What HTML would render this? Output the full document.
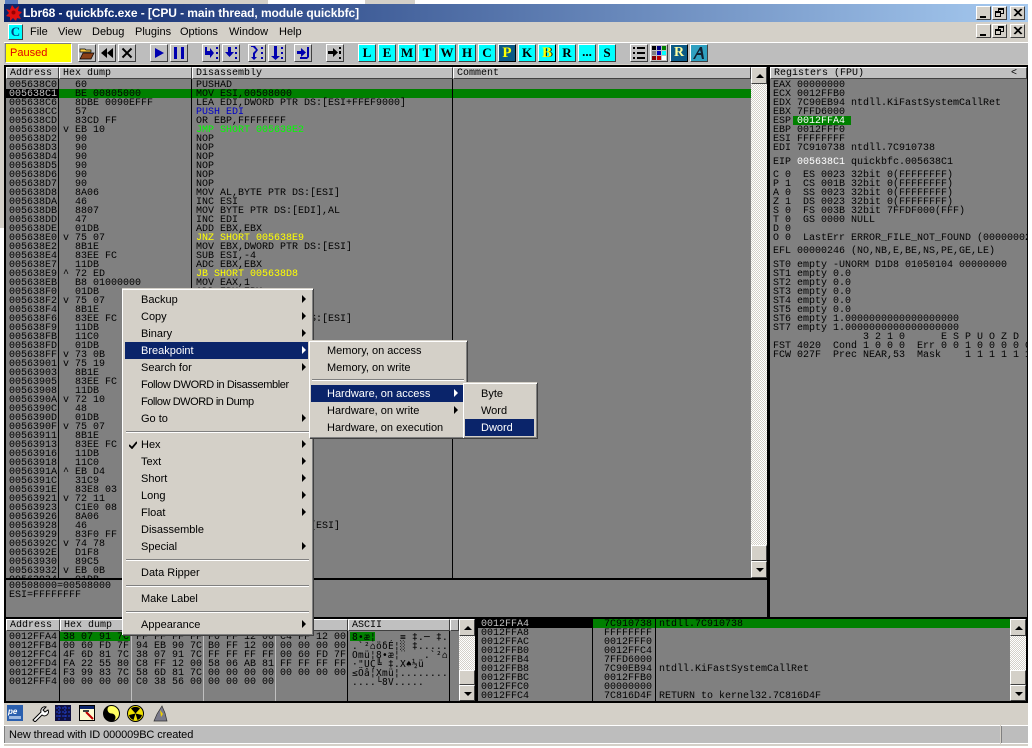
<!DOCTYPE html>
<html><head><meta charset="utf-8"><title>Lbr68</title>
<style>
html,body{margin:0;padding:0;background:#fff;width:1032px;height:748px;overflow:hidden}
div,pre,svg,span.a{position:absolute}
#root{left:0;top:0;width:1032px;height:748px;overflow:hidden;background:#fff;font-family:"Liberation Sans",sans-serif}
pre{margin:0;font:10px/9px "Liberation Mono","DejaVu Sans Mono",monospace;color:#000;white-space:pre;transform:translateY(1px)}
.hd{background:#c0c0c0;border-top:1px solid #fff;border-left:1px solid #fff;border-right:1px solid #404040;border-bottom:1px solid #404040;box-sizing:border-box;height:12px;font:10px/11px "Liberation Mono",monospace;padding-left:3px;color:#000;white-space:pre;overflow:hidden}
.b{background:#000}
.pane{background:#808080}
.mi{left:0;height:17px;font-size:11px;line-height:19px;white-space:pre;color:#000}
.sel{background:#0a246a;color:#fff}
.menu{background:#d4d0c8;border-top:1px solid #d4d0c8;box-shadow:inset 1px 1px 0 #fff,inset -1px -1px 0 #808080,1px 1px 0 #404040;box-sizing:border-box}
.ar{width:0;height:0;border-left:4px solid #000;border-top:4px solid transparent;border-bottom:4px solid transparent}
.sep{height:2px;background:linear-gradient(#808080 50%,#fff 50%)}
.m{font-size:11px;line-height:21px;top:22px;color:#000}
.tb{width:18px;height:18px;top:44px;background:#c0c0c0;box-sizing:border-box;border:1px solid;border-color:#fff #404040 #404040 #fff}
.lt{background:#0ff;font:bold 13px/16px "Liberation Serif",serif;text-align:center;color:#000}
.wb{width:15px;height:14px;background:#d4d0c8;box-sizing:border-box;border:1px solid;border-color:#fff #404040 #404040 #fff}
.sb{background:conic-gradient(#fff 25%,#d4d0c8 0 50%,#fff 0 75%,#d4d0c8 0) 0 0/2px 2px}
.sbb{background:#d4d0c8;box-sizing:border-box;border:1px solid;border-color:#fff #404040 #404040 #fff}
.up{left:4px;width:0;height:0;border-left:4px solid transparent;border-right:4px solid transparent;border-bottom:4px solid #000;top:6px}
.dn{left:4px;width:0;height:0;border-left:4px solid transparent;border-right:4px solid transparent;border-top:4px solid #000;top:6px}
</style></head><body>
<div id="root">
<!-- outer strips -->
<div style="left:0;top:0;width:268px;height:4px;background:#d4d0c8"></div>
<div style="left:365px;top:0;width:50px;height:4px;background:#d4d0c8"></div>
<div style="left:5px;top:0;width:13px;height:4px;background:#5a7ec0"></div>
<div style="left:0;top:0;width:4px;height:228px;background:#d4d0c8"></div>
<!-- window -->
<div style="left:4px;top:4px;width:1024px;height:742px;background:#d4d0c8"></div>
<div style="left:4px;top:4px;width:1024px;height:18px;background:linear-gradient(90deg,#0a246a,#a6caf0)"></div>
<svg style="left:6px;top:5px" width="16" height="16" viewBox="0 0 16 16"><path d="M6 0l3 4 4-3-1 5 4 1-3 3 2 4-4-1-1 3-3-3-3 3 0-4-4-1 3-3-3-4 4 1z" fill="#e01010"/><circle cx="7.500" cy="7.500" r="2" fill="#900"/></svg>
<div style="left:23px;top:4px;height:18px;font:bold 12px/18px 'Liberation Sans',sans-serif;color:#fff;white-space:pre;letter-spacing:-.08px">Lbr68 - quickbfc.exe - [CPU - main thread, module quickbfc]</div>
<!-- caption buttons -->
<div class="wb" style="left:976px;top:6px"><div style="left:3px;top:9px;width:6px;height:2px;background:#000"></div></div>
<div class="wb" style="left:992px;top:6px"><div style="left:5px;top:1px;width:6px;height:6px;border:1px solid #000;border-top-width:2px;box-sizing:border-box"></div><div style="left:2px;top:4px;width:6px;height:6px;border:1px solid #000;border-top-width:2px;box-sizing:border-box;background:#d4d0c8"></div></div>
<div class="wb" style="left:1010px;top:6px"><svg style="left:2px;top:1px" width="10" height="10"><path d="M1 1l7 7M2 1l7 7M8 1L1 8M9 1L2 8" stroke="#000" stroke-width="1"/></svg></div>
<div class="wb" style="left:976px;top:24px"><div style="left:3px;top:9px;width:6px;height:2px;background:#000"></div></div>
<div class="wb" style="left:992px;top:24px"><div style="left:5px;top:1px;width:6px;height:6px;border:1px solid #000;border-top-width:2px;box-sizing:border-box"></div><div style="left:2px;top:4px;width:6px;height:6px;border:1px solid #000;border-top-width:2px;box-sizing:border-box;background:#d4d0c8"></div></div>
<div class="wb" style="left:1010px;top:24px"><svg style="left:2px;top:1px" width="10" height="10"><path d="M1 1l7 7M2 1l7 7M8 1L1 8M9 1L2 8" stroke="#000" stroke-width="1"/></svg></div>
<!-- menu -->
<div class="tb lt" style="left:8px;top:24px;width:15px;height:16px;border-color:#fff #404040 #404040 #fff;line-height:14px;color:#004080">C</div>
<div class="m" style="left:30px">File</div>
<div class="m" style="left:58px">View</div>
<div class="m" style="left:92px">Debug</div>
<div class="m" style="left:135px">Plugins</div>
<div class="m" style="left:180px">Options</div>
<div class="m" style="left:229px">Window</div>
<div class="m" style="left:279px">Help</div>
<!-- toolbar -->
<div style="left:4px;top:42px;width:1024px;height:22px;background:#bdbdbd;border-top:1px solid #fff;box-sizing:border-box"></div>
<div style="left:5px;top:43px;width:67px;height:20px;background:#ff0;box-sizing:border-box;border:1px solid;border-color:#808080 #fff #fff #808080;color:#e00000;font:11px/18px 'Liberation Sans',sans-serif;padding-left:4px">Paused</div>
<div class="tb" style="left:78px"><svg width="16" height="16"><path d="M1 4h5l1 1h5v2H1z" fill="#ffd040" stroke="#000" stroke-width=".7"/><path d="M1 14l3-6h11l-3 6z" fill="#8a4018" stroke="#000" stroke-width=".7"/></svg></div>
<div class="tb" style="left:98px"><svg width="16" height="16"><path d="M8 3v10L2 8zM14 3v10L8 8z" fill="#000"/></svg></div>
<div class="tb" style="left:118px"><svg width="16" height="16"><path d="M3.500 3.500l9 9M12.500 3.500l-9 9" stroke="#000" stroke-width="2"/></svg></div>
<div class="tb" style="left:150px"><svg width="16" height="16"><path d="M4 3l9 5-9 5z" fill="#0000b0"/></svg></div>
<div class="tb" style="left:170px"><svg width="16" height="16"><path d="M3 2h3v12H3zM10 2h3v12h-3z" fill="#0000b0"/></svg></div>
<div class="tb" style="left:202px"><svg width="16" height="16"><path d="M2 2h2v4h3V3l4 5-4 5v-3H2zM13 2h2v2h-2zM13 7h2v2h-2zM13 12h2v2h-2z" fill="#0000b0"/></svg></div>
<div class="tb" style="left:222px"><svg width="16" height="16"><path d="M5 2h3v5h3l-4.500 5L2 7h3zM12 2h2v2h-2zM12 7h2v2h-2zM12 12h2v2h-2z" fill="#0000b0"/></svg></div>
<div class="tb" style="left:248px"><svg width="16" height="16"><path d="M2 1h4l3 4-3 4v3h2l-3 3-3-3h2V8l3-3-3-3H2zM12 2h2v2h-2zM12 7h2v2h-2zM12 12h2v2h-2z" fill="#0000b0"/></svg></div>
<div class="tb" style="left:268px"><svg width="16" height="16"><path d="M5 1h3v10h3l-4.500 4L2 11h3zM12 2h2v2h-2zM12 7h2v2h-2zM12 12h2v2h-2z" fill="#0000b0"/></svg></div>
<div class="tb" style="left:294px"><svg width="16" height="16"><path d="M2 6h4V3l5 4.500L6 12V9H2zM12 2h2v10l-2 2H5v-2h7z" fill="#0000b0"/></svg></div>
<div class="tb" style="left:326px"><svg width="16" height="16"><path d="M1 6h5V3l5 4.500L6 12V9H1zM12 2h2v2h-2zM12 6h2v3h-2zM12 12h2v2h-2z" fill="#000"/></svg></div>
<div class="tb lt" style="left:358px">L</div>
<div class="tb lt" style="left:378px">E</div>
<div class="tb lt" style="left:398px">M</div>
<div class="tb lt" style="left:418px">T</div>
<div class="tb lt" style="left:438px">W</div>
<div class="tb lt" style="left:458px">H</div>
<div class="tb lt" style="left:478px">C</div>
<div class="tb lt" style="left:498px;background:#0b5a86;color:#ff0;font-size:15px;border-bottom-color:#000;border-right-color:#000">P</div>
<div class="tb lt" style="left:518px">K</div>
<div class="tb lt" style="left:538px;color:#ff0;font-size:15px;text-shadow:1px 0 0 #000;border-bottom-color:#000;border-right-color:#000">B</div>
<div class="tb lt" style="left:558px">R</div>
<div class="tb lt" style="left:578px;line-height:14px">...</div>
<div class="tb lt" style="left:598px">S</div>
<div class="tb" style="left:630px"><svg width="16" height="16"><path d="M2 2h2v2H2zM6 2h8v2H6zM2 7h2v2H2zM6 7h8v2H6zM2 12h2v2H2zM6 12h8v2H6z" fill="#000"/></svg></div>
<div class="tb" style="left:650px"><svg width="16" height="16"><path fill="#000" d="M1 1h4v4H1z"/><path fill="#000080" d="M6 1h4v4H6z"/><path fill="#008000" d="M11 1h4v4h-4z"/><path fill="#808080" d="M1 6h4v4H1z"/><path fill="#0000c0" d="M6 6h4v4H6z"/><path fill="#0ff" d="M11 6h4v4h-4z"/><path fill="#800000" d="M1 11h4v4H1z"/><path fill="#c00000" d="M6 11h4v4H6z"/><path fill="#fff" d="M11 11h4v4h-4z"/></svg></div>
<div class="tb lt" style="left:670px;background:#0b5a86;color:#ffffa0;font-size:14px;border-bottom-color:#000;border-right-color:#000">R</div>
<div class="tb" style="left:690px;background:#30a0c0"><svg width="16" height="16"><path d="M2 14L9 2h2l2 12h-2l-1-4H6l-2 4zM7 8h3L9 5z" fill="#102030"/></svg></div>

<!-- black client -->
<div class="b" style="left:4px;top:65px;width:1024px;height:638px"></div>

<!-- disasm pane -->
<div class="pane" style="left:6px;top:67px;width:761px;height:512px;overflow:hidden"></div>
<div class="hd" style="left:6px;top:67px;width:53px">Address</div>
<div class="hd" style="left:59px;top:67px;width:133px">Hex dump</div>
<div class="hd" style="left:192px;top:67px;width:261px">Disassembly</div>
<div class="hd" style="left:453px;top:67px;width:298px">Comment</div>
<div class="b" style="left:6px;top:89px;width:52px;height:9px"></div>
<div style="left:59px;top:89px;width:692px;height:9px;background:#008000"></div>
<div class="b" style="left:58px;top:79px;width:1px;height:499px"></div>
<div class="b" style="left:191px;top:79px;width:1px;height:499px"></div>
<div class="b" style="left:452px;top:79px;width:1px;height:499px"></div>
<div style="left:6px;top:80px;width:745px;height:498px;overflow:hidden">
<pre style="left:3px;top:0">005638C0
<span style="color:#c0c0c0">005638C1</span>
005638C6
005638CC
005638CD
005638D0
005638D2
005638D3
005638D4
005638D5
005638D6
005638D7
005638D8
005638DA
005638DB
005638DD
005638DE
005638E0
005638E2
005638E4
005638E7
005638E9
005638EB
005638F0
005638F2
005638F4
005638F6
005638F9
005638FB
005638FD
005638FF
00563901
00563903
00563905
00563908
0056390A
0056390C
0056390D
0056390F
00563911
00563913
00563916
00563918
0056391A
0056391C
0056391E
00563921
00563923
00563926
00563928
00563929
0056392C
0056392E
00563930
00563932
00563934</pre>
<pre style="left:57px;top:0">  60
  BE 00805000
  8DBE 0090EFFF
  57
  83CD FF
v EB 10
  90
  90
  90
  90
  90
  90
  8A06
  46
  8807
  47
  01DB
v 75 07
  8B1E
  83EE FC
  11DB
^ 72 ED
  B8 01000000
  01DB
v 75 07
  8B1E
  83EE FC
  11DB
  11C0
  01DB
v 73 0B
v 75 19
  8B1E
  83EE FC
  11DB
v 72 10
  48
  01DB
v 75 07
  8B1E
  83EE FC
  11DB
  11C0
^ EB D4
  31C9
  83E8 03
v 72 11
  C1E0 08
  8A06
  46
  83F0 FF
v 74 78
  D1F8
  89C5
v EB 0B
  01DB</pre>
<pre style="left:190px;top:0">PUSHAD
MOV ESI,00508000
LEA EDI,DWORD PTR DS:[ESI+FFEF9000]
<span style="color:#0000c8">PUSH EDI</span>
OR EBP,FFFFFFFF
<span style="color:#00ff00">JMP SHORT 005638E2</span>
NOP
NOP
NOP
NOP
NOP
NOP
MOV AL,BYTE PTR DS:[ESI]
INC ESI
MOV BYTE PTR DS:[EDI],AL
INC EDI
ADD EBX,EBX
<span style="color:#ff0">JNZ SHORT 005638E9</span>
MOV EBX,DWORD PTR DS:[ESI]
SUB ESI,-4
ADC EBX,EBX
<span style="color:#ff0">JB SHORT 005638D8</span>
MOV EAX,1
ADD EBX,EBX


MOV EBX,DWORD PTR DS:[ESI]






















MOV AL,BYTE PTR DS:[ESI]</pre>
</div>
<!-- scrollbar disasm -->
<div class="sb" style="left:751px;top:67px;width:16px;height:511px"></div>
<div class="sbb" style="left:751px;top:67px;width:16px;height:17px"><div class="up"></div></div>
<div class="sbb" style="left:751px;top:545px;width:16px;height:16px"></div>
<div class="sbb" style="left:751px;top:561px;width:16px;height:17px"><div class="dn"></div></div>
<!-- info pane -->
<div class="b" style="left:6px;top:578px;width:761px;height:2px"></div>
<div class="pane" style="left:6px;top:580px;width:761px;height:37px"></div>
<pre style="left:9px;top:581px">00508000=00508000
ESI=FFFFFFFF</pre>

<!-- registers -->
<div class="pane" style="left:770px;top:67px;width:257px;height:550px"></div>
<div class="hd" style="left:770px;top:67px;width:257px">Registers (FPU)</div>
<div style="left:1011px;top:68px;font:10px/11px 'Liberation Mono',monospace">&lt;</div>
<div style="left:793px;top:116px;width:58px;height:9px;background:#008000"></div>
<div style="left:770px;top:80px;width:257px;height:290px;overflow:hidden">
<pre style="left:3px;top:0">EAX 00000000
ECX 0012FFB0
EDX 7C90EB94 ntdll.KiFastSystemCallRet
EBX 7FFD6000
ESP <span style="color:#fff">0012FFA4</span>
EBP 0012FFF0
ESI FFFFFFFF
EDI 7C910738 ntdll.7C910738</pre>
<pre style="left:3px;top:77px">EIP <span style="color:#fff">005638C1</span> quickbfc.005638C1</pre>
<pre style="left:3px;top:90px">C 0  ES 0023 32bit 0(FFFFFFFF)
P 1  CS 001B 32bit 0(FFFFFFFF)
A 0  SS 0023 32bit 0(FFFFFFFF)
Z 1  DS 0023 32bit 0(FFFFFFFF)
S 0  FS 003B 32bit 7FFDF000(FFF)
T 0  GS 0000 NULL
D 0
O 0  LastErr ERROR_FILE_NOT_FOUND (00000002)</pre>
<pre style="left:3px;top:166px">EFL 00000246 (NO,NB,E,BE,NS,PE,GE,LE)</pre>
<pre style="left:3px;top:180px">ST0 empty -UNORM D1D8 01050104 00000000
ST1 empty 0.0
ST2 empty 0.0
ST3 empty 0.0
ST4 empty 0.0
ST5 empty 0.0
ST6 empty 1.0000000000000000000
ST7 empty 1.0000000000000000000
               3 2 1 0      E S P U O Z D
FST 4020  Cond 1 0 0 0  Err 0 0 1 0 0 0 0 0 (GT)
FCW 027F  Prec NEAR,53  Mask    1 1 1 1 1 1</pre>
</div>

<!-- dump pane -->
<div class="pane" style="left:6px;top:619px;width:468px;height:82px"></div>
<div class="hd" style="left:6px;top:619px;width:54px">Address</div>
<div class="hd" style="left:60px;top:619px;width:288px">Hex dump</div>
<div class="hd" style="left:348px;top:619px;width:102px">ASCII</div>
<div class="hd" style="left:450px;top:619px;width:9px"></div>
<div style="left:60px;top:632px;width:70px;height:9px;background:#008000"></div>
<div style="left:350px;top:632px;width:25px;height:9px;background:#008000"></div>
<div class="b" style="left:59px;top:631px;width:1px;height:70px"></div>
<div style="left:131px;top:631px;width:1px;height:70px;background:#c0c0c0"></div>
<div style="left:203px;top:631px;width:1px;height:70px;background:#c0c0c0"></div>
<div style="left:275px;top:631px;width:1px;height:70px;background:#c0c0c0"></div>
<div class="b" style="left:347px;top:631px;width:1px;height:70px"></div>
<div class="b" style="left:449px;top:631px;width:1px;height:70px"></div>
<pre style="left:9px;top:632px">0012FFA4
0012FFB4
0012FFC4
0012FFD4
0012FFE4
0012FFF4</pre>
<pre style="left:63px;top:632px">38 07 91 7C
00 60 FD 7F
4F 6D 81 7C
FA 22 55 80
F3 99 83 7C
00 00 00 00</pre>
<pre style="left:136px;top:632px">FF FF FF FF
94 EB 90 7C
38 07 91 7C
C8 FF 12 00
58 6D 81 7C
C0 38 56 00</pre>
<pre style="left:208px;top:632px">F0 FF 12 00
B0 FF 12 00
FF FF FF FF
58 06 AB 81
00 00 00 00
00 00 00 00</pre>
<pre style="left:280px;top:632px">C4 FF 12 00
00 00 00 00
00 60 FD 7F
FF FF FF FF
00 00 00 00</pre>
<pre style="left:352px;top:632px;font-family:'DejaVu Sans Mono','Liberation Mono',monospace;font-size:9.500px;letter-spacing:.28px">8•æ¦    ≡ ‡.─ ‡.
.`²⌂öδÉ¦░ ‡.....
Omü¦8•æ¦    .`²⌂
·"UÇ╚ ‡.X♠½ü
≤Öâ¦Xmü¦........
....└8V.....</pre>
<div class="sb" style="left:459px;top:619px;width:16px;height:82px"></div>
<div class="sbb" style="left:459px;top:619px;width:16px;height:17px"><div class="up"></div></div>
<div class="sbb" style="left:459px;top:670px;width:16px;height:15px"></div>
<div class="sbb" style="left:459px;top:685px;width:16px;height:16px"><div class="dn"></div></div>

<!-- stack pane -->
<div class="pane" style="left:478px;top:619px;width:532px;height:82px"></div>
<div class="b" style="left:478px;top:619px;width:114px;height:9px"></div>
<div style="left:593px;top:619px;width:417px;height:9px;background:#008000"></div>
<div class="b" style="left:592px;top:619px;width:1px;height:82px"></div>
<div class="b" style="left:655px;top:619px;width:1px;height:82px"></div>
<pre style="left:481px;top:619px"><span style="color:#c0c0c0">0012FFA4</span>
0012FFA8
0012FFAC
0012FFB0
0012FFB4
0012FFB8
0012FFBC
0012FFC0
0012FFC4</pre>
<pre style="left:604px;top:619px">7C910738
FFFFFFFF
0012FFF0
0012FFC4
7FFD6000
7C90EB94
0012FFB0
00000000
7C816D4F</pre>
<pre style="left:659px;top:619px">ntdll.7C910738




ntdll.KiFastSystemCallRet


RETURN to kernel32.7C816D4F</pre>
<div class="sb" style="left:1010px;top:619px;width:16px;height:82px"></div>
<div class="sbb" style="left:1010px;top:619px;width:16px;height:17px"><div class="up"></div></div>
<div class="sbb" style="left:1010px;top:670px;width:16px;height:15px"></div>
<div class="sbb" style="left:1010px;top:685px;width:16px;height:16px"><div class="dn"></div></div>

<!-- bottom toolbar -->
<svg style="left:7px;top:705px" width="17" height="17"><rect width="16" height="16" fill="#2a5fae"/><text x="1" y="9" font-family="Liberation Sans" font-size="8" font-weight="bold" font-style="italic" fill="#fff">pe</text><rect x="2" y="11" width="12" height="3" fill="#9db8e0"/></svg>
<svg style="left:31px;top:705px" width="18" height="17"><path d="M2 15l8-8a4 4 0 0 1 5-5l-3 3 2 2 3-2a4 4 0 0 1-6 5l-7 7z" fill="#fff" stroke="#000"/></svg>
<svg style="left:55px;top:705px" width="16" height="16"><rect width="16" height="16" fill="#101040"/><path d="M1 3h14M1 7h14M1 11h14M4 1v14M10 1v14" stroke="#2040d0" stroke-dasharray="2 1"/></svg>
<svg style="left:79px;top:705px" width="16" height="16"><rect x=".5" y=".5" width="15" height="15" fill="#fffbd0" stroke="#000"/><rect x="1" y="1" width="14" height="3" fill="#0a246a"/><path d="M7 7l7 7" stroke="#c00000" stroke-width="2"/><path d="M4 6h6" stroke="#404040" stroke-width="2"/></svg>
<svg style="left:103px;top:705px" width="17" height="17"><circle cx="8.500" cy="8.500" r="8" fill="#ffff60" stroke="#000"/><path d="M8.500.5a8 8 0 0 0 0 16 4 4 0 0 0 0-8 4 4 0 0 1 0-8z" fill="#000"/></svg>
<svg style="left:127px;top:705px" width="17" height="17"><circle cx="8.500" cy="8.500" r="8" fill="#f0e000" stroke="#000"/><path d="M8.500 8.500L4 3.500a7 7 0 0 1 9 0zM8.500 8.500L15 10a7 7 0 0 1-4.500 5zM8.500 8.500L6.500 15A7 7 0 0 1 2 10z" fill="#000"/></svg>
<svg style="left:152px;top:705px" width="16" height="17"><path d="M2 16l3-7 5-8 3 7 2 8z" fill="#7a7a8a" stroke="#303030" stroke-width=".7"/><path d="M8 5l3 4-2 3z" fill="#f0d000"/></svg>

<!-- status bar -->
<div style="left:4px;top:725px;width:996px;height:19px;background:#bdbdbd;border-top:1px solid #fff;border-bottom:1px solid #fff;box-sizing:border-box;box-shadow:inset 1px 0 0 #808080;font-size:11px;line-height:18px;letter-spacing:-.1px;padding-left:5px;white-space:pre">New thread with ID 000009BC created</div>
<div style="left:1001px;top:725px;width:27px;height:19px;background:#bdbdbd;border-top:1px solid #fff;border-bottom:1px solid #fff;box-sizing:border-box;box-shadow:inset 1px 0 0 #808080"></div>

<!-- context menu -->
<div class="menu" style="left:122px;top:288px;width:191px;height:347px">
 <div class="mi" style="top:2px;width:191px;padding-left:19px;box-sizing:border-box">Backup</div><div class="ar" style="left:180px;top:6px"></div>
 <div class="mi" style="top:19px;width:191px;padding-left:19px;box-sizing:border-box">Copy</div><div class="ar" style="left:180px;top:23px"></div>
 <div class="mi" style="top:36px;width:191px;padding-left:19px;box-sizing:border-box">Binary</div><div class="ar" style="left:180px;top:40px"></div>
 <div class="mi sel" style="left:3px;top:53px;width:183px;padding-left:16px;box-sizing:border-box">Breakpoint</div><div class="ar" style="left:180px;top:57px;border-left-color:#fff"></div>
 <div class="mi" style="top:70px;padding-left:19px">Search for</div><div class="ar" style="left:180px;top:74px"></div>
 <div class="mi" style="top:87px;padding-left:19px;letter-spacing:-.4px">Follow DWORD in Disassembler</div>
 <div class="mi" style="top:104px;padding-left:19px;letter-spacing:-.45px">Follow DWORD in Dump</div>
 <div class="mi" style="top:121px;padding-left:19px">Go to</div><div class="ar" style="left:180px;top:125px"></div>
 <div class="sep" style="left:4px;top:142px;width:183px"></div>
 <svg style="left:7px;top:152px" width="8" height="8"><path d="M0 4l3 3 5-6" fill="none" stroke="#000" stroke-width="1.800"/></svg>
 <div class="mi" style="top:147px;padding-left:19px">Hex</div><div class="ar" style="left:180px;top:151px"></div>
 <div class="mi" style="top:164px;padding-left:19px">Text</div><div class="ar" style="left:180px;top:168px"></div>
 <div class="mi" style="top:181px;padding-left:19px">Short</div><div class="ar" style="left:180px;top:185px"></div>
 <div class="mi" style="top:198px;padding-left:19px">Long</div><div class="ar" style="left:180px;top:202px"></div>
 <div class="mi" style="top:215px;padding-left:19px">Float</div><div class="ar" style="left:180px;top:219px"></div>
 <div class="mi" style="top:232px;padding-left:19px">Disassemble</div>
 <div class="mi" style="top:249px;padding-left:19px">Special</div><div class="ar" style="left:180px;top:253px"></div>
 <div class="sep" style="left:4px;top:270px;width:183px"></div>
 <div class="mi" style="top:275px;padding-left:19px">Data Ripper</div>
 <div class="sep" style="left:4px;top:296px;width:183px"></div>
 <div class="mi" style="top:301px;padding-left:19px">Make Label</div>
 <div class="sep" style="left:4px;top:322px;width:183px"></div>
 <div class="mi" style="top:327px;padding-left:19px">Appearance</div><div class="ar" style="left:180px;top:331px"></div>
</div>
<div class="menu" style="left:309px;top:340px;width:158px;height:98px">
 <div class="mi" style="top:1px;padding-left:18px">Memory, on access</div>
 <div class="mi" style="top:18px;padding-left:18px">Memory, on write</div>
 <div class="sep" style="left:3px;top:38px;width:152px"></div>
 <div class="mi sel" style="left:2px;top:44px;width:152px;padding-left:16px;box-sizing:border-box">Hardware, on access</div><div class="ar" style="left:145px;top:48px;border-left-color:#fff"></div>
 <div class="mi" style="top:61px;padding-left:18px">Hardware, on write</div><div class="ar" style="left:145px;top:65px"></div>
 <div class="mi" style="top:78px;padding-left:18px">Hardware, on execution</div>
</div>
<div class="menu" style="left:463px;top:382px;width:74px;height:56px">
 <div class="mi" style="top:2px;padding-left:18px">Byte</div>
 <div class="mi" style="top:19px;padding-left:18px">Word</div>
 <div class="mi sel" style="left:2px;top:36px;width:69px;padding-left:16px;box-sizing:border-box">Dword</div>
</div>
</div>
</body></html>
